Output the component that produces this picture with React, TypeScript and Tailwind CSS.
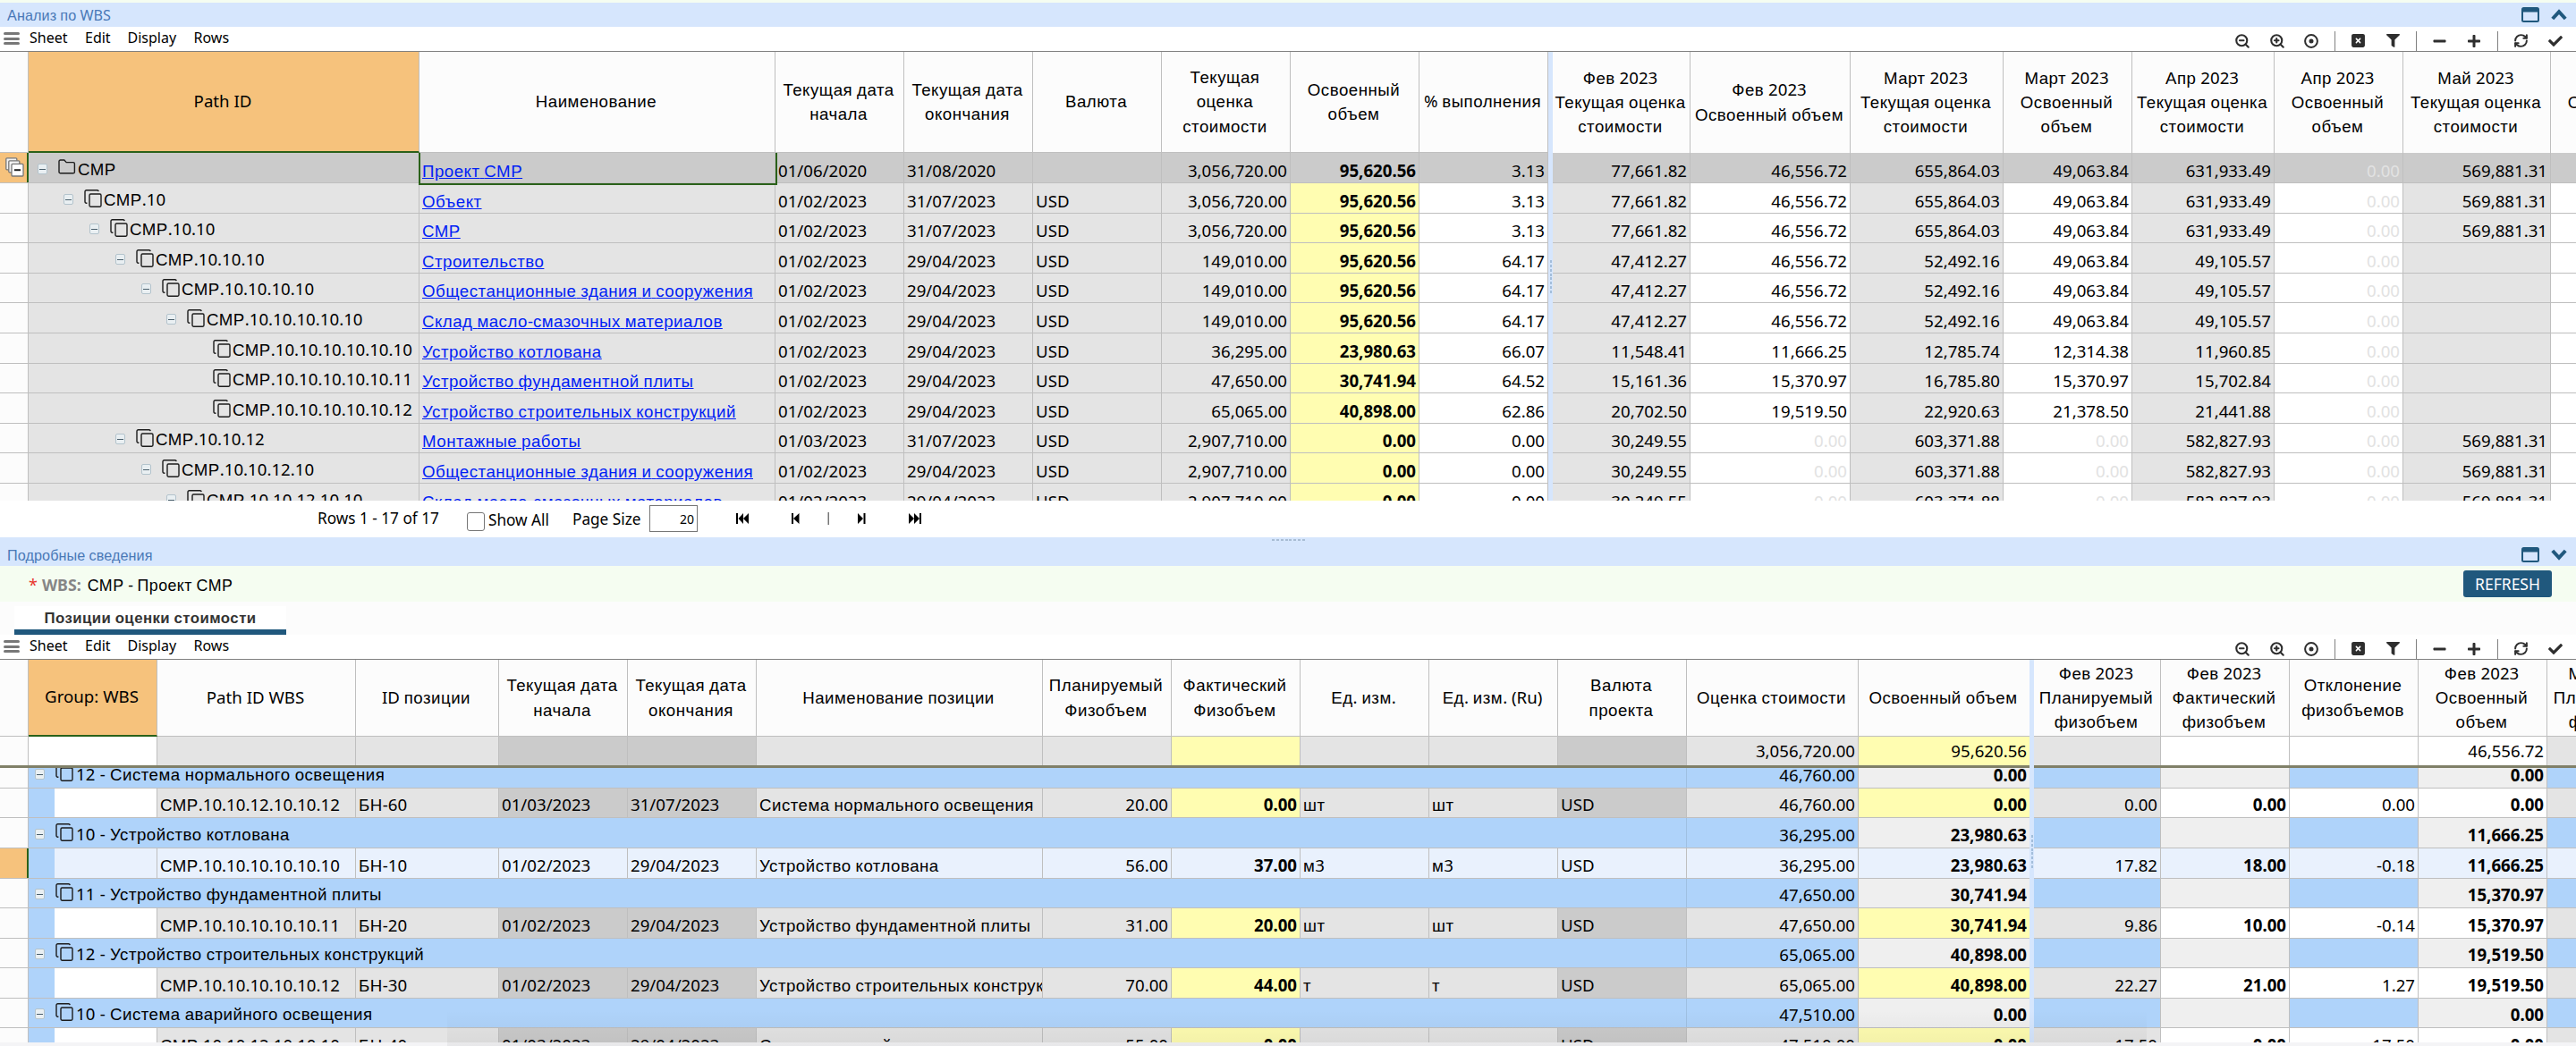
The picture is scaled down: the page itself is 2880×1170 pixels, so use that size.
import React from "react";
import { FaMinus, FaPlus, FaFilter, FaCheck } from "react-icons/fa";
import { FaSquareXmark } from "react-icons/fa6";
import { ZoomIn, ZoomOut, RefreshCw } from "lucide-react";

const CYRILLIC = /([\u0400-\u04FF]+)/;

/** Latin and digits use the base face, Cyrillic runs use the sans fallback. */
function T({ s, tight }: { s: string; tight?: boolean }) {
  return (
    <>
      {s.split(CYRILLIC).map((part, i) =>
        i % 2 ? (
          <span key={i} className={`font-['Liberation_Sans',sans-serif] leading-none ${tight ? "tracking-[0.005em]" : "tracking-[0.027em]"}`}>{part}</span>
        ) : (
          <React.Fragment key={i}>{part}</React.Fragment>
        )
      )}
    </>
  );
}

/* ---------- icons ---------- */

function CopyIcon() {
  return (
    <svg width="20" height="20" viewBox="0 0 20 20" fill="none" stroke="#1c1c1c" strokeWidth="1.4" className="shrink-0">
      <path d="M3.4 15.2H2.6A1.6 1.6 0 0 1 1 13.6V2.4A1.6 1.6 0 0 1 2.6.8h12A1.6 1.6 0 0 1 16.2 2.2" />
      <rect x="6" y="5" width="13" height="14.2" rx="1.4" />
    </svg>
  );
}

function FolderIcon() {
  return (
    <svg width="20" height="17" viewBox="0 0 20 17" fill="none" stroke="#1c1c1c" strokeWidth="1.4" className="shrink-0">
      <path d="M1 2.6A1.6 1.6 0 0 1 2.6 1h4.2l2.4 2.6h7.6a1.6 1.6 0 0 1 1.6 1.6v9a1.6 1.6 0 0 1-1.6 1.6H2.6A1.6 1.6 0 0 1 1 14.200z" />
    </svg>
  );
}

function Expander() {
  return (
    <span className="flex h-3 w-[11px] shrink-0 items-center justify-center rounded-[2px] border border-[#b3c3cc] bg-[#e9eff2]">
      <span className="h-px w-[7px] bg-[#4a5f6c]" />
    </span>
  );
}

function StackIcon() {
  return (
    <svg width="21" height="22" viewBox="0 0 21 22" fill="#f3f3f3" stroke="#777" strokeWidth="1.3">
      <rect x="0.8" y="0.8" width="12" height="13" rx="1" />
      <rect x="3.8" y="3.800" width="12" height="13" rx="1" />
      <rect x="7" y="7.400" width="13" height="13.600" rx="1" fill="#fff" />
      <path d="M10 14.200h7" stroke="#222" strokeWidth="2" />
    </svg>
  );
}

function WindowIcon() {
  return (
    <svg width="20" height="17" viewBox="0 0 20 17">
      <rect x="1" y="1" width="18" height="15" rx="1.500" fill="none" stroke="#20587d" strokeWidth="2" />
      <rect x="1" y="1" width="18" height="4.500" fill="#20587d" />
    </svg>
  );
}

function Chevron({ up }: { up?: boolean }) {
  return (
    <svg width="18" height="13" viewBox="0 0 18 13" fill="none" stroke="#20587d" strokeWidth="4">
      <path d={up ? "M1.800 11L9 3.200l7.200 7.800" : "M1.800 2L9 9.800 16.200 2"} />
    </svg>
  );
}

function Target() {
  return (
    <svg viewBox="0 0 18 18" className="ml-5 h-[18px] w-[18px]">
      <circle cx="9" cy="9" r="6.900" fill="none" stroke="currentColor" strokeWidth="2" />
      <circle cx="9" cy="9" r="2.500" fill="currentColor" />
    </svg>
  );
}

/* ---------- shared bars ---------- */

function TitleBar({ title, className, up }: { title: string; className: string; up?: boolean }) {
  return (
    <div className={`relative flex shrink-0 items-center justify-between bg-[#d6e6fd] pr-[10px] pl-2 ${className}`}>
      <span className="text-[16.200px] leading-6 text-[#4a79b7]"><T s={title} tight /></span>
      <span className="flex items-center gap-[13px]">
        <WindowIcon />
        <Chevron up={up} />
      </span>
    </div>
  );
}

function Toolbar() {
  const sep = <span className="h-[22px] w-px self-end bg-[#808080]" />;
  return (
    <div className="flex h-7 shrink-0 items-center justify-between border-b border-[#808080] bg-white">
      <div className="flex h-full items-start pl-1 text-base leading-[25px]">
        <span className="mt-[6px] mr-[11px] flex h-[14px] w-[18px] flex-col justify-between">
          <span className="h-[3px] rounded bg-[#777]" />
          <span className="h-[3px] rounded bg-[#777]" />
          <span className="h-[3px] rounded bg-[#777]" />
        </span>
        <span className="w-[62px]">Sheet</span>
        <span className="w-[47.500px]">Edit</span>
        <span className="w-[74px]">Display</span>
        <span>Rows</span>
      </div>
      <div className="flex h-full items-center pr-[15px] text-[#2e2e2e] [&>svg]:mt-[4px]">
        <ZoomOut className="h-[18px] w-[18px]" strokeWidth={2.800} />
        <ZoomIn className="ml-[21px] h-[18px] w-[18px]" strokeWidth={2.800} />
        <Target />
        <span className="w-[17px]" />{sep}<span className="w-[17px]" />
        <FaSquareXmark className="h-[17px] w-[17px]" />
        <FaFilter className="ml-[23px] h-[15px] w-[15px]" />
        <span className="w-[18px]" />{sep}<span className="w-[18px]" />
        <FaMinus className="h-[16px] w-[15px]" />
        <FaPlus className="ml-[23px] h-[16px] w-[16px]" />
        <span className="w-[18px]" />{sep}<span className="w-[17px]" />
        <RefreshCw className="h-[17px] w-[17px]" strokeWidth={2.800} />
        <FaCheck className="ml-[22px] h-[16px] w-[16px]" />
      </div>
    </div>
  );
}

function Head({ w, lines, sel }: { w: string; lines: string[]; sel?: boolean }) {
  return (
    <div
      className={`flex shrink-0 flex-col items-center justify-center border-r border-[#bfbfbf] pr-[2px] pb-[2px] text-center leading-[27.300px] whitespace-nowrap ${w} ${
        sel ? "border-b-2 border-b-[#2a6119] bg-[#f6c27c]" : "bg-[#fcfcfc]"
      }`}
    >
      {lines.map((l) => (
        <span key={l} className="h-[27.300px]"><T s={l} /></span>
      ))}
    </div>
  );
}

type CellProps = { w: string; bg: string; v?: string; left?: boolean; bold?: boolean; faint?: boolean; pb?: string };

function Cell({ w, bg, v = "", left, bold, faint, pb = "pb-[2px]" }: CellProps) {
  return (
    <div
      className={`flex shrink-0 items-end overflow-hidden border-r border-[#bfbfbf] leading-6 whitespace-nowrap ${pb} ${w} ${bg} ${
        left ? "justify-start pl-[3px]" : "justify-end pr-[3px]"
      } ${bold ? "font-bold" : ""} ${faint ? "text-[#e2e2e2]" : ""}`}
    >
      <span className="shrink-0"><T s={v} /></span>
    </div>
  );
}

function Splitter({ grip }: { grip: string }) {
  return (
    <div className="relative w-[5px] shrink-0 bg-[#d6e6fd]">
      <div className={`absolute left-[2px] flex h-[37px] w-[2px] flex-col justify-between ${grip}`}>
        {Array.from({ length: 8 }, (_, i) => (
          <span key={i} className="h-[3px] bg-[#a3bedb]" />
        ))}
      </div>
    </div>
  );
}

/* ---------- WBS analysis ---------- */

const G = "bg-[#e4e4e4]";
const D = "bg-[#cbcbcb]";
const W = "bg-white";
const Y = "bg-[#fffdb1]";
const B = "bg-[#afd3fa]";
const S = "bg-[#e9f1fd]";
const N = "bg-[#efefef]";

const H1 = ["h-[34px]", "h-[34px]", "h-[33px]", "h-[34px]", "h-[33px]", "h-[34px]", "h-[34px]", "h-[33px]", "h-[34px]", "h-[33px]", "h-[34px]", "h-[34px]"];

type Wbs = { level: number; leaf?: boolean; id: string; name: string; cells: string[]; right: string[] };
const U = "USD";
const WBS: Wbs[] = [
  { level: 0, id: "СМР", name: "Проект СМР", cells: ["01/06/2020", "31/08/2020", "", "3,056,720.00", "95,620.56", "3.13"], right: ["77,661.82", "46,556.72", "655,864.03", "49,063.84", "631,933.49", "0.00", "569,881.31"] },
  { level: 1, id: "СМР.10", name: "Объект", cells: ["01/02/2023", "31/07/2023", U, "3,056,720.00", "95,620.56", "3.13"], right: ["77,661.82", "46,556.72", "655,864.03", "49,063.84", "631,933.49", "0.00", "569,881.31"] },
  { level: 2, id: "СМР.10.10", name: "СМР", cells: ["01/02/2023", "31/07/2023", U, "3,056,720.00", "95,620.56", "3.13"], right: ["77,661.82", "46,556.72", "655,864.03", "49,063.84", "631,933.49", "0.00", "569,881.31"] },
  { level: 3, id: "СМР.10.10.10", name: "Строительство", cells: ["01/02/2023", "29/04/2023", U, "149,010.00", "95,620.56", "64.17"], right: ["47,412.27", "46,556.72", "52,492.16", "49,063.84", "49,105.57", "0.00", ""] },
  { level: 4, id: "СМР.10.10.10.10", name: "Общестанционные здания и сооружения", cells: ["01/02/2023", "29/04/2023", U, "149,010.00", "95,620.56", "64.17"], right: ["47,412.27", "46,556.72", "52,492.16", "49,063.84", "49,105.57", "0.00", ""] },
  { level: 5, id: "СМР.10.10.10.10.10", name: "Склад масло-смазочных материалов", cells: ["01/02/2023", "29/04/2023", U, "149,010.00", "95,620.56", "64.17"], right: ["47,412.27", "46,556.72", "52,492.16", "49,063.84", "49,105.57", "0.00", ""] },
  { level: 6, leaf: true, id: "СМР.10.10.10.10.10.10", name: "Устройство котлована", cells: ["01/02/2023", "29/04/2023", U, "36,295.00", "23,980.63", "66.07"], right: ["11,548.41", "11,666.25", "12,785.74", "12,314.38", "11,960.85", "0.00", ""] },
  { level: 6, leaf: true, id: "СМР.10.10.10.10.10.11", name: "Устройство фундаментной плиты", cells: ["01/02/2023", "29/04/2023", U, "47,650.00", "30,741.94", "64.52"], right: ["15,161.36", "15,370.97", "16,785.80", "15,370.97", "15,702.84", "0.00", ""] },
  { level: 6, leaf: true, id: "СМР.10.10.10.10.10.12", name: "Устройство строительных конструкций", cells: ["01/02/2023", "29/04/2023", U, "65,065.00", "40,898.00", "62.86"], right: ["20,702.50", "19,519.50", "22,920.63", "21,378.50", "21,441.88", "0.00", ""] },
  { level: 3, id: "СМР.10.10.12", name: "Монтажные работы", cells: ["01/03/2023", "31/07/2023", U, "2,907,710.00", "0.00", "0.00"], right: ["30,249.55", "0.00", "603,371.88", "0.00", "582,827.93", "0.00", "569,881.31"] },
  { level: 4, id: "СМР.10.10.12.10", name: "Общестанционные здания и сооружения", cells: ["01/02/2023", "29/04/2023", U, "2,907,710.00", "0.00", "0.00"], right: ["30,249.55", "0.00", "603,371.88", "0.00", "582,827.93", "0.00", "569,881.31"] },
  { level: 5, id: "СМР.10.10.12.10.10", name: "Склад масло-смазочных материалов", cells: ["01/02/2023", "29/04/2023", U, "2,907,710.00", "0.00", "0.00"], right: ["30,249.55", "0.00", "603,371.88", "0.00", "582,827.93", "0.00", "569,881.31"] },
];
const INDENT = ["pl-[10px]", "pl-[39px]", "pl-[68px]", "pl-[97px]", "pl-[126px]", "pl-[154px]", "pl-[183px]"];
const RW1 = ["w-[154px]", "w-[179px]", "w-[171px]", "w-[144px]", "w-[159px]", "w-[144px]", "w-[165px]", "w-[144px]"];

function WbsTable() {
  return (
    <div className="flex h-[502px] shrink-0 overflow-hidden">
      <div className="w-[1731px] shrink-0">
        <div className="flex h-[113px] border-b border-[#bfbfbf]">
          <Head w="w-8" lines={[]} />
          <div className="-mb-px flex"><Head w="w-[437px]" lines={["Path ID"]} sel /></div>
          <Head w="w-[398px]" lines={["Наименование"]} />
          <Head w="w-[144px]" lines={["Текущая дата", "начала"]} />
          <Head w="w-[144px]" lines={["Текущая дата", "окончания"]} />
          <Head w="w-[144px]" lines={["Валюта"]} />
          <Head w="w-[144px]" lines={["Текущая", "оценка", "стоимости"]} />
          <Head w="w-[144px]" lines={["Освоенный", "объем"]} />
          <Head w="w-[144px]" lines={["% выполнения"]} />
        </div>
        {WBS.map((r, i) => {
          const g = i === 0 ? D : G;
          return (
            <div key={i} className={`relative flex border-b border-[#bfbfbf] ${H1[i]}`}>
              {i === 0 ? (
                <div className="flex w-8 shrink-0 items-start border-r-2 border-[#2a6119] bg-[#f6c27c] pt-[5px] pl-[6px]"><StackIcon /></div>
              ) : (
                <div className="w-8 shrink-0 border-r border-[#bfbfbf] bg-[#fcfcfc]" />
              )}
              <div className={`flex w-[437px] shrink-0 items-end border-r border-[#bfbfbf] pb-[3px] leading-6 whitespace-nowrap ${g} ${INDENT[r.level]}`}>
                <span className="mb-[6px] flex w-[23px] shrink-0">{!r.leaf && <Expander />}</span>
                <span className={`flex w-[22px] shrink-0 ${i === 0 ? "mb-[6px]" : "mb-[3px]"}`}>{i === 0 ? <FolderIcon /> : <CopyIcon />}</span>
                <span><T s={r.id} /></span>
              </div>
              <div className={`flex w-[398px] shrink-0 items-end border-r border-[#bfbfbf] pb-px pl-[3px] leading-6 ${g}`}>
                <a className="text-[#001ef5] underline"><T s={r.name} /></a>
              </div>
              {i === 0 && <div className="absolute top-0 left-[468px] z-10 h-[36px] w-[401px] border-2 border-t-0 border-[#2a6119]" />}
              <Cell w="w-[144px]" bg={g} v={r.cells[0]} left pb="pb-px" />
              <Cell w="w-[144px]" bg={g} v={r.cells[1]} left pb="pb-px" />
              <Cell w="w-[144px]" bg={g} v={r.cells[2]} left pb="pb-px" />
              <Cell w="w-[144px]" bg={g} v={r.cells[3]} pb="pb-px" />
              <Cell w="w-[144px]" bg={i === 0 ? D : Y} v={r.cells[4]} bold pb="pb-px" />
              <Cell w="w-[144px]" bg={i === 0 ? D : W} v={r.cells[5]} pb="pb-px" />
            </div>
          );
        })}
      </div>
      <Splitter grip="top-[233px]" />
      <div className="min-w-0 flex-1 overflow-hidden">
        <div className="flex h-[113px]">
          <Head w="w-[154px]" lines={["Фев 2023", "Текущая оценка", "стоимости"]} />
          <Head w="w-[179px]" lines={["Фев 2023", "Освоенный объем"]} />
          <Head w="w-[171px]" lines={["Март 2023", "Текущая оценка", "стоимости"]} />
          <Head w="w-[144px]" lines={["Март 2023", "Освоенный", "объем"]} />
          <Head w="w-[159px]" lines={["Апр 2023", "Текущая оценка", "стоимости"]} />
          <Head w="w-[144px]" lines={["Апр 2023", "Освоенный", "объем"]} />
          <Head w="w-[165px]" lines={["Май 2023", "Текущая оценка", "стоимости"]} />
          <Head w="w-[144px]" lines={["", "Освоенный", " "]} />
        </div>
        {WBS.map((r, i) => (
          <div key={i} className={`flex w-[1260px] border-b border-[#bfbfbf] ${H1[i]}`}>
            {[...r.right, ""].map((v, c) => (
              <Cell key={c} w={RW1[c]} bg={i === 0 ? D : c % 2 ? W : G} v={v} faint={v === "0.00"} pb="pb-px" />
            ))}
          </div>
        ))}
      </div>
    </div>
  );
}

function Pager() {
  return (
    <div className="flex h-[41px] shrink-0 items-start bg-white text-[17.200px] leading-6">
      <span className="mt-2 ml-[355px] w-[167px]">Rows 1 - 17 of 17</span>
      <span className="mt-[13px] h-[21px] w-5 rounded-[3px] border-[1.500px] border-[#767676]" />
      <span className="mt-[10px] ml-1 w-[94px]">Show All</span>
      <span className="mt-[9px] w-[86px]">Page Size</span>
      <span className="mt-[5px] h-[30px] w-[54px] border border-[#767676] pr-[3px] text-right text-[14px] leading-[30px]">20</span>
      <svg width="210" height="14" viewBox="0 0 210 14" className="mt-[13px] ml-[41px]">
        <path d="M2 1h2v12H2zM10 1v12L4.500 7zM16 1v12L10 7z" />
        <path d="M64 1h2v12h-2zM72.500 1v12L66 7z" />
        <path d="M104.500 0h1.500v14h-1.500z" fill="#777" />
        <path d="M138 1v12l6-6zM144.500 1h2v12h-2z" />
        <path d="M195 1v12l6-6zM201 1v12l6-6zM207 1h2v12h-2z" />
      </svg>
    </div>
  );
}

/* ---------- cost items ---------- */

const LW2 = ["w-[222px]", "w-40", "w-36", "w-36", "w-80", "w-36", "w-36", "w-36", "w-36", "w-36", "w-48", "w-[192px]"];
const RW2 = ["w-[142px]", "w-[144px]", "w-[144px]", "w-[144px]", "w-[144px]"];

type Item = { h: string; group?: string; sel?: boolean; left?: string[]; sums?: string[]; right: string[] };
const ITEMS: Item[] = [
  { h: "h-[23px]", group: "12 - Система нормального освещения", sums: ["46,760.00", "0.00"], right: ["", "", "", "0.00", ""] },
  { h: "h-[33px]", left: ["СМР.10.10.12.10.10.12", "БН-60", "01/03/2023", "31/07/2023", "Система нормального освещения", "20.00", "0.00", "шт", "шт", U, "46,760.00", "0.00"], right: ["0.00", "0.00", "0.00", "0.00", ""] },
  { h: "h-[34px]", group: "10 - Устройство котлована", sums: ["36,295.00", "23,980.63"], right: ["", "", "", "11,666.25", ""] },
  { h: "h-[34px]", sel: true, left: ["СМР.10.10.10.10.10.10", "БН-10", "01/02/2023", "29/04/2023", "Устройство котлована", "56.00", "37.00", "м3", "м3", U, "36,295.00", "23,980.63"], right: ["17.82", "18.00", "-0.18", "11,666.25", ""] },
  { h: "h-[33px]", group: "11 - Устройство фундаментной плиты", sums: ["47,650.00", "30,741.94"], right: ["", "", "", "15,370.97", ""] },
  { h: "h-[34px]", left: ["СМР.10.10.10.10.10.11", "БН-20", "01/02/2023", "29/04/2023", "Устройство фундаментной плиты", "31.00", "20.00", "шт", "шт", U, "47,650.00", "30,741.94"], right: ["9.86", "10.00", "-0.14", "15,370.97", ""] },
  { h: "h-[33px]", group: "12 - Устройство строительных конструкций", sums: ["65,065.00", "40,898.00"], right: ["", "", "", "19,519.50", ""] },
  { h: "h-[34px]", left: ["СМР.10.10.10.10.10.12", "БН-30", "01/02/2023", "29/04/2023", "Устройство строительных конструкций", "70.00", "44.00", "т", "т", U, "65,065.00", "40,898.00"], right: ["22.27", "21.00", "1.27", "19,519.50", ""] },
  { h: "h-[33px]", group: "10 - Система аварийного освещения", sums: ["47,510.00", "0.00"], right: ["", "", "", "0.00", ""] },
  { h: "h-[34px]", left: ["СМР.10.10.12.10.10.10", "БН-40", "01/03/2023", "29/04/2023", "Система аварийного освещения", "55.00", "0.00", "", "", U, "47,510.00", "0.00"], right: ["17.50", "0.00", "17.50", "0.00", ""] },
];
const LBG = [G, G, D, D, G, G, Y, G, G, D, G, Y];
const RBG = [G, W, W, W, G];
const LEFT_ALIGNED = [true, true, true, true, true, false, false, true, true, true, false, false];
const SUMMARY = ["", "", "", "", "", "", "", "", "", "", "3,056,720.00", "95,620.56"];

function ItemsTable() {
  return (
    <div className="flex h-[428px] shrink-0 overflow-hidden">
      <div className="w-[2269px] shrink-0 overflow-hidden">
        <div className="flex h-[86px] w-[2270px] border-b border-[#bfbfbf]">
          <Head w="w-8" lines={[]} />
          <div className="-mb-px flex"><Head w="w-[144px]" lines={["Group: WBS"]} sel /></div>
          <Head w="w-[222px]" lines={["Path ID WBS"]} />
          <Head w="w-40" lines={["ID позиции"]} />
          <Head w="w-36" lines={["Текущая дата", "начала"]} />
          <Head w="w-36" lines={["Текущая дата", "окончания"]} />
          <Head w="w-80" lines={["Наименование позиции"]} />
          <Head w="w-36" lines={["Планируемый", "Физобъем"]} />
          <Head w="w-36" lines={["Фактический", "Физобъем"]} />
          <Head w="w-36" lines={["Ед. изм."]} />
          <Head w="w-36" lines={["Ед. изм. (Ru)"]} />
          <Head w="w-36" lines={["Валюта", "проекта"]} />
          <Head w="w-48" lines={["Оценка стоимости"]} />
          <Head w="w-48" lines={["Освоенный объем"]} />
        </div>
        <div className="flex h-[35px] w-[2270px] border-b-[3px] border-[#808068]">
          <Cell w="w-8" bg="bg-[#fcfcfc]" />
          <Cell w="w-36" bg={W} />
          {SUMMARY.map((v, c) => <Cell key={c} w={LW2[c]} bg={LBG[c]} v={v} pb="pb-[4px]" />)}
        </div>
        {ITEMS.map((r, i) => (
          <div key={i} className={`flex w-[2270px] overflow-hidden border-b border-[#bfbfbf] ${r.h}`}>
            {r.sel ? (
              <div className="w-8 shrink-0 border-r-2 border-[#2a6119] bg-[#f6c27c]" />
            ) : (
              <div className="w-8 shrink-0 border-r border-[#bfbfbf] bg-[#fcfcfc]" />
            )}
            {r.group ? (
              <>
                <div className="flex w-[1854px] shrink-0 items-end border-r border-[#9fc0e2] bg-[#afd3fa] pb-[3px] pl-[7px] leading-6 whitespace-nowrap">
                  <span className="mb-[6px] flex w-[23px] shrink-0"><Expander /></span>
                  <span className="mb-1 flex w-[23px] shrink-0"><CopyIcon /></span>
                  <span className="tracking-[0.01em]"><T s={r.group} /></span>
                </div>
                <Cell w="w-48" bg={B} v={r.sums![0]} />
                <Cell w="w-48" bg={N} v={r.sums![1]} bold />
              </>
            ) : (
              <>
                <div className="w-[29px] shrink-0 bg-[#afd3fa]" />
                <Cell w="w-[115px]" bg={r.sel ? S : W} />
                {r.left!.map((v, c) => (
                  <Cell key={c} w={LW2[c]} bg={r.sel ? S : LBG[c]} v={v} left={LEFT_ALIGNED[c]} bold={c === 6 || c === 11} />
                ))}
              </>
            )}
          </div>
        ))}
      </div>
      <Splitter grip="top-[196px]" />
      <div className="min-w-0 flex-1 overflow-hidden">
        <div className="flex h-[86px] w-[720px] border-b border-[#bfbfbf]">
          <Head w="w-[142px]" lines={["Фев 2023", "Планируемый", "физобъем"]} />
          <Head w="w-[144px]" lines={["Фев 2023", "Фактический", "физобъем"]} />
          <Head w="w-[144px]" lines={["Отклонение", "физобъемов"]} />
          <Head w="w-[144px]" lines={["Фев 2023", "Освоенный", "объем"]} />
          <Head w="w-[144px]" lines={["Март 2023", "Планируемый", "физобъем"]} />
        </div>
        <div className="flex h-[35px] w-[720px] border-b-[3px] border-[#808068]">
          {["", "", "", "46,556.72", ""].map((v, c) => <Cell key={c} w={RW2[c]} bg={RBG[c]} v={v} pb="pb-[4px]" />)}
        </div>
        {ITEMS.map((r, i) => (
          <div key={i} className={`flex w-[720px] overflow-hidden border-b border-[#bfbfbf] ${r.h}`}>
            {r.right.map((v, c) => (
              <Cell key={c} w={RW2[c]} bg={r.group ? (c % 2 ? N : B) : r.sel ? S : RBG[c]} v={v} bold={c % 2 === 1} />
            ))}
          </div>
        ))}
      </div>
    </div>
  );
}

export default function App() {
  return (
    <div className="relative flex h-[1170px] w-[2880px] flex-col overflow-hidden bg-[#f5fdf1] pt-[3px] font-['Noto_Sans',sans-serif] text-[18.670px] text-black">
      <TitleBar title="Анализ по WBS" className="h-[27px]" up />
      <Toolbar />
      <WbsTable />
      <Pager />
      <div className="relative shrink-0">
        <TitleBar title="Подробные сведения" className="h-8 pt-[7px]" />
        <div className="absolute top-[2px] left-[1422px] flex h-[2px] w-[37px] justify-between">
          {Array.from({ length: 8 }, (_, i) => <span key={i} className="w-[3px] bg-[#a9bdd4]" />)}
        </div>
      </div>
      <div className="flex h-10 shrink-0 items-center justify-between pr-[27px] pl-8">
        <span className="flex items-center pt-px leading-6">
          <span className="text-[18px] text-[#e8372c]">*</span>
          <span className="ml-[5px] text-[17.800px] font-bold text-[#868686]">WBS:</span>
          <span className="ml-[7px] text-[17.800px]"><T s="СМР - Проект СМР" /></span>
        </span>
        <span className="flex h-[30px] w-[99px] items-center justify-center rounded-[3px] bg-[#20587d] pt-px text-[17.500px] text-white">REFRESH</span>
      </div>
      <div className="flex h-[37px] shrink-0 items-end bg-[#fcfcfc] pl-4">
        <div className="flex h-8 w-[304px] items-center justify-center border-b-[6px] border-[#20587d] bg-white text-[16.800px] leading-6 font-bold text-[#333]">
          <span><T s="Позиции оценки стоимости" /></span>
        </div>
      </div>
      <Toolbar />
      <ItemsTable />
      <div className="h-1 shrink-0 bg-[#f4f4f6]" />
      <div className="pointer-events-none absolute bottom-0 left-[500px] h-[40px] w-[1900px] bg-gradient-to-b from-transparent to-black/5" />
    </div>
  );
}
